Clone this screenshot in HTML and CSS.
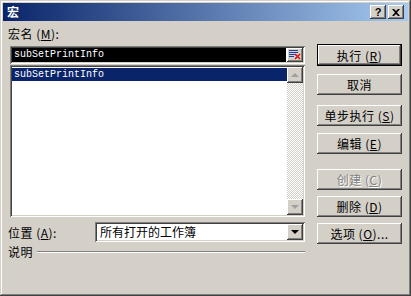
FILE: index.html
```html
<!DOCTYPE html>
<html lang="zh-CN">
<head>
    <meta charset="UTF-8">
    <title>宏</title>
    <link rel="stylesheet" href="styles.css">
</head>
<body>
    <div class="window">
        <div class="titlebar">
            <span class="title">宏</span>
            <div class="title-btns">
                <span class="cap-btn">?</span>
                <span class="cap-btn close">
                    <svg width="8" height="7" viewBox="0 0 8 7"><path d="M0 0h2l2 2 2-2h2L5 3.5 8 7H6L4 5 2 7H0l3-3.5z" fill="#000"/></svg>
                </span>
            </div>
        </div>

        <div class="dialog">
            <div class="left">
                <div class="label">宏名 (<u>M</u>):</div>

                <div class="name-field sunken">
                    <span class="name-sel">subSetPrintInfo</span>
                    <span class="pick-btn raised">
                        <svg width="12" height="10" viewBox="0 0 12 10">
                            <rect x="0" y="0" width="9" height="1" fill="#1d3fa8"/>
                            <rect x="0" y="2" width="9" height="1" fill="#1d3fa8"/>
                            <rect x="0" y="4" width="6" height="1" fill="#1d3fa8"/>
                            <rect x="0" y="6" width="5" height="1" fill="#1d3fa8"/>
                            <path d="M6 4l5 5M11 4l-5 5" stroke="#e01010" stroke-width="1.6"/>
                        </svg>
                    </span>
                </div>

                <div class="macro-list sunken">
                    <div class="list-items">
                        <div class="list-item selected">subSetPrintInfo</div>
                    </div>
                    <div class="vscroll">
                        <span class="arrow-btn raised"><span class="tri up dim"></span></span>
                        <span class="track"></span>
                        <span class="arrow-btn raised"><span class="tri down dim"></span></span>
                    </div>
                </div>

                <div class="loc-row">
                    <span class="loc-label">位置 (<u>A</u>):</span>
                    <div class="combo sunken">
                        <span class="combo-text">所有打开的工作簿</span>
                        <span class="arrow-btn raised"><span class="tri down"></span></span>
                    </div>
                </div>

                <div class="desc-row">
                    <span>说明</span>
                    <span class="etched"></span>
                </div>
            </div>

            <div class="right">
                <button class="btn default b-run">执行 (<u>R</u>)</button>
                <button class="btn b-cancel">取消</button>
                <button class="btn b-step">单步执行 (<u>S</u>)</button>
                <button class="btn b-edit">编辑 (<u>E</u>)</button>
                <button class="btn disabled b-create">创建 (<u>C</u>)</button>
                <button class="btn b-del">删除 (<u>D</u>)</button>
                <button class="btn b-opt">选项 (<u>O</u>)...</button>
            </div>
        </div>
    </div>
</body>
</html>
```

FILE: styles.css
```css
/* Base */
* {
    margin: 0;
    padding: 0;
    box-sizing: border-box;
}

body {
    width: 411px;
    height: 296px;
    overflow: hidden;
    background: #d4d0c8;
    font-family: "Noto Sans CJK SC", "Liberation Sans", sans-serif;
    font-size: 12px;
    color: #000;
}

u {
    text-decoration: underline;
    text-underline-offset: 1px;
}

/* Window frame */
.window {
    width: 411px;
    height: 296px;
    padding: 3px;
    background: #d4d0c8;
    box-shadow: inset -1px -1px #404040, inset 1px 1px #d4d0c8,
                inset -2px -2px #808080, inset 2px 2px #fff;
}

.titlebar {
    height: 18px;
    display: flex;
    align-items: center;
    justify-content: space-between;
    padding: 0 2px 0 4px;
    background: linear-gradient(to right, #0a246a, #a6caf0);
}

.title {
    color: #fff;
    font-weight: 700;
    font-size: 12px;
    line-height: 18px;
}

.title-btns {
    display: flex;
    gap: 2px;
    margin-right: 2px;
}

.cap-btn {
    width: 16px;
    height: 14px;
    display: flex;
    align-items: center;
    justify-content: center;
    background: #d4d0c8;
    font-family: "Liberation Sans", sans-serif;
    font-weight: 700;
    font-size: 11px;
    line-height: 14px;
    box-shadow: inset -1px -1px #404040, inset 1px 1px #fff,
                inset -2px -2px #808080;
}

/* 3D helpers */
.raised {
    background: #d4d0c8;
    box-shadow: inset -1px -1px #404040, inset 1px 1px #fff,
                inset -2px -2px #808080, inset 2px 2px #d4d0c8;
}

.sunken {
    background: #fff;
    box-shadow: inset 1px 1px #808080, inset -1px -1px #fff,
                inset 2px 2px #404040, inset -2px -2px #d4d0c8;
}

/* Layout */
.dialog {
    display: flex;
    padding: 6px 6px 0 5px;
}

.left {
    width: 297px;
}

.label {
    line-height: 14px;
    height: 14px;
    margin-bottom: 5px;
    letter-spacing: 0.5px;
}

.name-field {
    margin-left: 2px;
    height: 18px;
    padding: 2px;
    display: flex;
}

.name-sel {
    flex: 1;
    margin: 0 1px 0 0;
    background: #000;
    color: #fff;
    font-family: "Liberation Mono", monospace;
    font-size: 10px;
    line-height: 14px;
    padding-left: 2px;
}

.pick-btn {
    width: 16px;
    height: 14px;
    display: flex;
    align-items: center;
    justify-content: center;
}

.macro-list {
    margin: 1px 0 0 2px;
    height: 152px;
    padding: 2px;
    display: flex;
}

.list-items {
    flex: 1;
    padding-top: 1px;
}

.list-item {
    height: 13px;
    line-height: 13px;
    padding-left: 2px;
    font-family: "Liberation Mono", monospace;
    font-size: 10px;
}

.list-item.selected {
    background: #0a246a;
    color: #fff;
}

.vscroll {
    width: 16px;
    display: flex;
    flex-direction: column;
}

.track {
    flex: 1;
    background: repeating-conic-gradient(#d4d0c8 0 25%, #fff 0 50%) 0 0 / 2px 2px;
}

.arrow-btn {
    width: 16px;
    height: 16px;
    display: flex;
    align-items: center;
    justify-content: center;
}

.tri {
    width: 0;
    height: 0;
    border-left: 4px solid transparent;
    border-right: 4px solid transparent;
}

.tri.up {
    border-bottom: 4px solid #000;
}

.tri.down {
    border-top: 4px solid #000;
}

.tri.dim.up {
    border-bottom-color: #a0a0a0;
}

.tri.dim.down {
    border-top-color: #a0a0a0;
}

.loc-row {
    display: flex;
    align-items: center;
    margin-top: 5px;
    height: 20px;
}

.loc-label {
    width: 87px;
    letter-spacing: 0.5px;
}

.combo {
    flex: 1;
    height: 20px;
    padding: 2px;
    display: flex;
    align-items: center;
}

.combo-text {
    flex: 1;
    padding-left: 3px;
    line-height: 16px;
}

.combo .arrow-btn {
    height: 16px;
}

.desc-row {
    display: flex;
    align-items: center;
    margin-top: 3px;
    line-height: 14px;
    letter-spacing: 0.5px;
}

.etched {
    flex: 1;
    height: 2px;
    margin-left: 4px;
    border-top: 1px solid #808080;
    border-bottom: 1px solid #fff;
}

/* Buttons */
.right {
    width: 85px;
    margin-left: 12px;
    display: flex;
    flex-direction: column;
}

.btn {
    width: 85px;
    height: 21px;
    border: none;
    background: #d4d0c8;
    font-family: "Noto Sans CJK SC", "Liberation Sans", sans-serif;
    font-size: 12px;
    letter-spacing: 0.5px;
    color: #000;
    box-shadow: inset -1px -1px #404040, inset 1px 1px #fff,
                inset -2px -2px #808080, inset 2px 2px #d4d0c8;
}

.btn.default {
    height: 22px;
    box-shadow: inset 0 0 0 1px #000, inset -2px -2px #404040, inset 2px 2px #fff,
                inset -3px -3px #808080;
}

.btn.disabled {
    color: #808080;
    text-shadow: 1px 1px #fff;
}

.b-run { margin-top: 17px; }
.b-cancel { margin-top: 8px; }
.b-step { margin-top: 10px; }
.b-edit { margin-top: 7px; }
.b-create { margin-top: 15px; }
.b-del { margin-top: 6px; }
.b-opt { margin-top: 6px; }
```
